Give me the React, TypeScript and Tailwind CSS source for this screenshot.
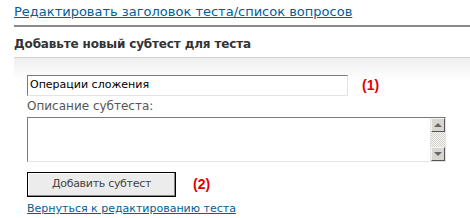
import React from 'react'

const FONT = { fontFamily: '"DejaVu Sans", Verdana, sans-serif' }
const ARIAL = { fontFamily: '"Liberation Sans", Arial, sans-serif' }

function Scrollbar() {
  return (
    <div className="flex w-[15px] flex-col border-l border-[#e4e4e4]">
      <div className="flex h-[14px] items-center justify-center border border-t-[#f4f4f4] border-l-[#f4f4f4] border-r-[#555] border-b-[#555] bg-[#d8d6cf]">
        <div className="h-0 w-0 border-x-[4px] border-b-[4px] border-x-transparent border-b-[#666]" />
      </div>
      <div className="flex-1 bg-[repeating-conic-gradient(#d4d0c8_0%_25%,#f6f6f6_0%_50%)] bg-[length:2px_2px]" />
      <div className="flex h-[14px] items-center justify-center border border-t-[#f4f4f4] border-l-[#f4f4f4] border-r-[#555] border-b-[#555] bg-[#d8d6cf]">
        <div className="h-0 w-0 border-x-[4px] border-t-[4px] border-x-transparent border-t-[#666]" />
      </div>
    </div>
  )
}

export default function App() {
  return (
    <div className="h-[218px] w-[470px] overflow-hidden bg-white" style={FONT}>
      <div className="pl-[14px]">
        <div className="flex h-[25px] items-center pb-[2px]">
          <a href="#" className="text-[13px] leading-[16px] text-[#00609a] underline">
            Редактировать заголовок теста/список вопросов
          </a>
        </div>
        <div className="h-[2px] bg-[#8a8a8a]" />
        <div className="flex h-[30px] items-center pt-[4px] text-[12px] font-bold tracking-[-0.15px] text-[#333]">
          Добавьте новый субтест для теста
        </div>
        <div className="h-px bg-[#d2d2d2]" />
        <div className="bg-gradient-to-b from-[#efefef] to-white to-[22px] pl-[13px] pt-[17px]">
          <div className="flex items-center">
            <div className="flex h-[21px] w-[321px] items-center border border-t-[#7a7a7a] border-l-[#7a7a7a] border-r-[#e4e4e4] border-b-[#e4e4e4] bg-white pl-[2px] text-[11px] text-black">
              Операции сложения
            </div>
            <span className="ml-[14px] text-[14px] font-bold text-[#e00000]" style={ARIAL}>
              (1)
            </span>
          </div>
          <div className="mt-[2px] text-[12px] leading-[16px] text-[#555]">Описание субтеста:</div>
          <div className="mt-[3px] flex h-[45px] w-[419px] border border-t-[#7a7a7a] border-l-[#7a7a7a] border-r-[#e4e4e4] border-b-[#e4e4e4] bg-white">
            <div className="flex-1" />
            <Scrollbar />
          </div>
          <div className="mt-[10px] flex items-center">
            <div className="flex h-[25px] w-[149px] items-center justify-center border border-black bg-[#ececec] text-[11px] tracking-[-0.3px] text-[#444] shadow-[inset_-1px_-1px_0_#888,inset_1px_1px_0_#fff]">
              Добавить субтест
            </div>
            <span className="ml-[17px] text-[14px] font-bold text-[#e00000]" style={ARIAL}>
              (2)
            </span>
          </div>
          <a href="#" className="mt-[4px] block text-[11px] leading-[16px] text-[#00609a] underline">
            Вернуться к редактированию теста
          </a>
        </div>
      </div>
    </div>
  )
}
